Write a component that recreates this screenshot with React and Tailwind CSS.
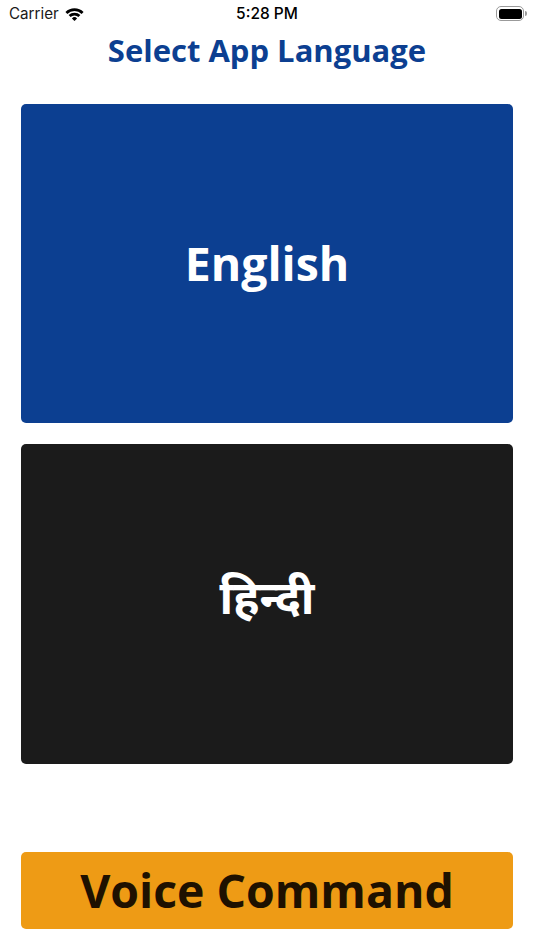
export default function App() {
  const os = { fontFamily: '"Open Sans", "Noto Sans", sans-serif' };
  return (
    <div className="w-[534px] h-[950px] bg-white flex flex-col overflow-hidden font-['Open_Sans','Noto_Sans',sans-serif]">
      <div className="h-[28px] relative flex items-center justify-center font-['Inter','Liberation_Sans',sans-serif] text-black">
        <div className="absolute left-[9px] top-[5px] flex items-center gap-[6px]">
          <span className="text-[15.2px] leading-[18px] text-[#1a1a1a] font-normal">Carrier</span>
          <svg width="19" height="14" viewBox="0 0 19 14" fill="#000" className="mt-[-1px]">
            <path d="M1.4 5.9A11.500 11.500 0 0 1 17.600 5.900" fill="none" stroke="#000" strokeWidth="2.800" />
            <path d="M4.600 9.100A6.900 6.900 0 0 1 14.400 9.100" fill="none" stroke="#000" strokeWidth="2.800" />
            <path d="M9.500 14L6.900 11.400A3.700 3.700 0 0 1 12.100 11.400Z" />
          </svg>
        </div>
        <span className="text-[15.5px] leading-[18px] font-medium">5:28 PM</span>
        <div className="absolute left-[496px] top-[6px] flex items-center gap-[1px]">
          <div className="w-[28px] h-[15px] rounded-[5px] border border-[#9a9a9a] p-[1.500px]">
            <div className="w-full h-full bg-black rounded-[2.500px]" />
          </div>
          <div className="w-[1.500px] h-[5px] bg-[#9a9a9a] rounded-r-sm" />
        </div>
      </div>
      <h1 style={os} className="text-center text-[31px] leading-[46px] font-bold text-[#0c3f91] mt-[-1px]">Select App Language</h1>
      <div className="flex flex-col gap-[21px] px-[21px] mt-[31px]">
        <div className="h-[319px] rounded-[5px] bg-[#0c3f91] flex items-center justify-center">
          <span className="text-[46.4px] font-bold text-white">English</span>
        </div>
        <div className="h-[320px] rounded-[5px] bg-[#1b1b1b] flex items-center justify-center">
          <span className="text-[46.4px] font-bold text-white mb-[14px]">हिन्दी</span>
        </div>
      </div>
      <div className="px-[21px] mt-[88px]">
        <div className="h-[77px] rounded-[5px] bg-[#ee9b15] flex items-center justify-center">
          <span className="text-[46.4px] font-bold text-[#1e1100]">Voice Command</span>
        </div>
      </div>
    </div>
  );
}
